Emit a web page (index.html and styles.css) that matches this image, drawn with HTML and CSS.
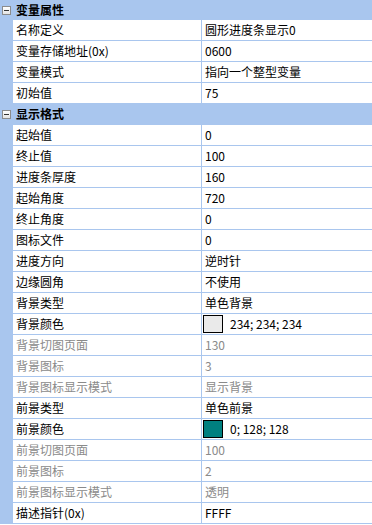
FILE: index.html
```html
<!DOCTYPE html>
<html lang="zh">
<head>
<meta charset="utf-8">
<title>属性</title>
<link rel="stylesheet" href="styles.css">
</head>
<body>
<div class="grid">
  <div class="hdr first"><span class="tog"></span><span class="htext">变量属性</span></div>
  <div class="row"><div class="gut"></div><div class="lab">名称定义</div><div class="val">圆形进度条显示0</div></div>
  <div class="row"><div class="gut"></div><div class="lab">变量存储地址(0x)</div><div class="val">0600</div></div>
  <div class="row"><div class="gut"></div><div class="lab">变量模式</div><div class="val">指向一个整型变量</div></div>
  <div class="row"><div class="gut"></div><div class="lab">初始值</div><div class="val">75</div></div>
  <div class="hdr"><span class="tog"></span><span class="htext">显示格式</span></div>
  <div class="row"><div class="gut"></div><div class="lab">起始值</div><div class="val">0</div></div>
  <div class="row"><div class="gut"></div><div class="lab">终止值</div><div class="val">100</div></div>
  <div class="row"><div class="gut"></div><div class="lab">进度条厚度</div><div class="val">160</div></div>
  <div class="row"><div class="gut"></div><div class="lab">起始角度</div><div class="val">720</div></div>
  <div class="row"><div class="gut"></div><div class="lab">终止角度</div><div class="val">0</div></div>
  <div class="row"><div class="gut"></div><div class="lab">图标文件</div><div class="val">0</div></div>
  <div class="row"><div class="gut"></div><div class="lab">进度方向</div><div class="val">逆时针</div></div>
  <div class="row"><div class="gut"></div><div class="lab">边缘圆角</div><div class="val">不使用</div></div>
  <div class="row"><div class="gut"></div><div class="lab">背景类型</div><div class="val">单色背景</div></div>
  <div class="row"><div class="gut"></div><div class="lab">背景颜色</div><div class="val"><span class="sw sw-light"></span><span class="swt">234; 234; 234</span></div></div>
  <div class="row dis"><div class="gut"></div><div class="lab">背景切图页面</div><div class="val">130</div></div>
  <div class="row dis"><div class="gut"></div><div class="lab">背景图标</div><div class="val">3</div></div>
  <div class="row dis"><div class="gut"></div><div class="lab">背景图标显示模式</div><div class="val">显示背景</div></div>
  <div class="row"><div class="gut"></div><div class="lab">前景类型</div><div class="val">单色前景</div></div>
  <div class="row"><div class="gut"></div><div class="lab">前景颜色</div><div class="val"><span class="sw sw-teal"></span><span class="swt">0; 128; 128</span></div></div>
  <div class="row dis"><div class="gut"></div><div class="lab">前景切图页面</div><div class="val">100</div></div>
  <div class="row dis"><div class="gut"></div><div class="lab">前景图标</div><div class="val">2</div></div>
  <div class="row dis"><div class="gut"></div><div class="lab">前景图标显示模式</div><div class="val">透明</div></div>
  <div class="row"><div class="gut"></div><div class="lab">描述指针(0x)</div><div class="val">FFFF</div></div>
</div>
</body>
</html>
```
FILE: styles.css
```css
html, body {
  margin: 0;
  padding: 0;
  background: #ffffff;
}
body {
  width: 372px;
  height: 525px;
  overflow: hidden;
  font-family: "Noto Sans CJK SC", "Noto Sans", sans-serif;
  font-size: 12px;
  color: #000000;
}
.grid {
  display: flex;
  flex-direction: column;
}
.hdr {
  height: 20px;
  background: #a9c6ee;
  border-bottom: 1px solid #a9c6ee;
  display: flex;
  align-items: center;
}
.hdr.first {
  border-bottom: none;
}
.tog {
  width: 7px;
  height: 7px;
  margin-left: 2px;
  margin-right: 5px;
  border: 1px solid #8c8c8c;
  background: linear-gradient(#ffffff, #e4e4e4);
  display: flex;
  align-items: center;
  justify-content: center;
}
.tog::after {
  content: "";
  width: 5px;
  height: 1px;
  background: #333333;
}
.htext {
  font-weight: bold;
  line-height: 20px;
}
.row {
  display: flex;
  height: 20px;
  border-bottom: 1px solid #a9c6ee;
}
.gut {
  width: 13px;
  flex: none;
  background: #a9c6ee;
}
.lab {
  width: 185px;
  flex: none;
  padding-left: 3px;
  line-height: 20px;
  white-space: nowrap;
  background: #ffffff;
}
.val {
  flex: 1;
  border-left: 1px solid #a9c6ee;
  padding-left: 3px;
  line-height: 20px;
  white-space: nowrap;
  display: flex;
  align-items: center;
  background: #ffffff;
}
.dis .lab, .dis .val {
  color: #8a8a8a;
}
.sw {
  width: 18px;
  height: 16px;
  border: 1px solid #000000;
  margin-left: -2px;
  margin-right: 7px;
  flex: none;
}
.sw-light {
  background: rgb(234, 234, 234);
}
.sw-teal {
  background: rgb(0, 128, 128);
}
```
